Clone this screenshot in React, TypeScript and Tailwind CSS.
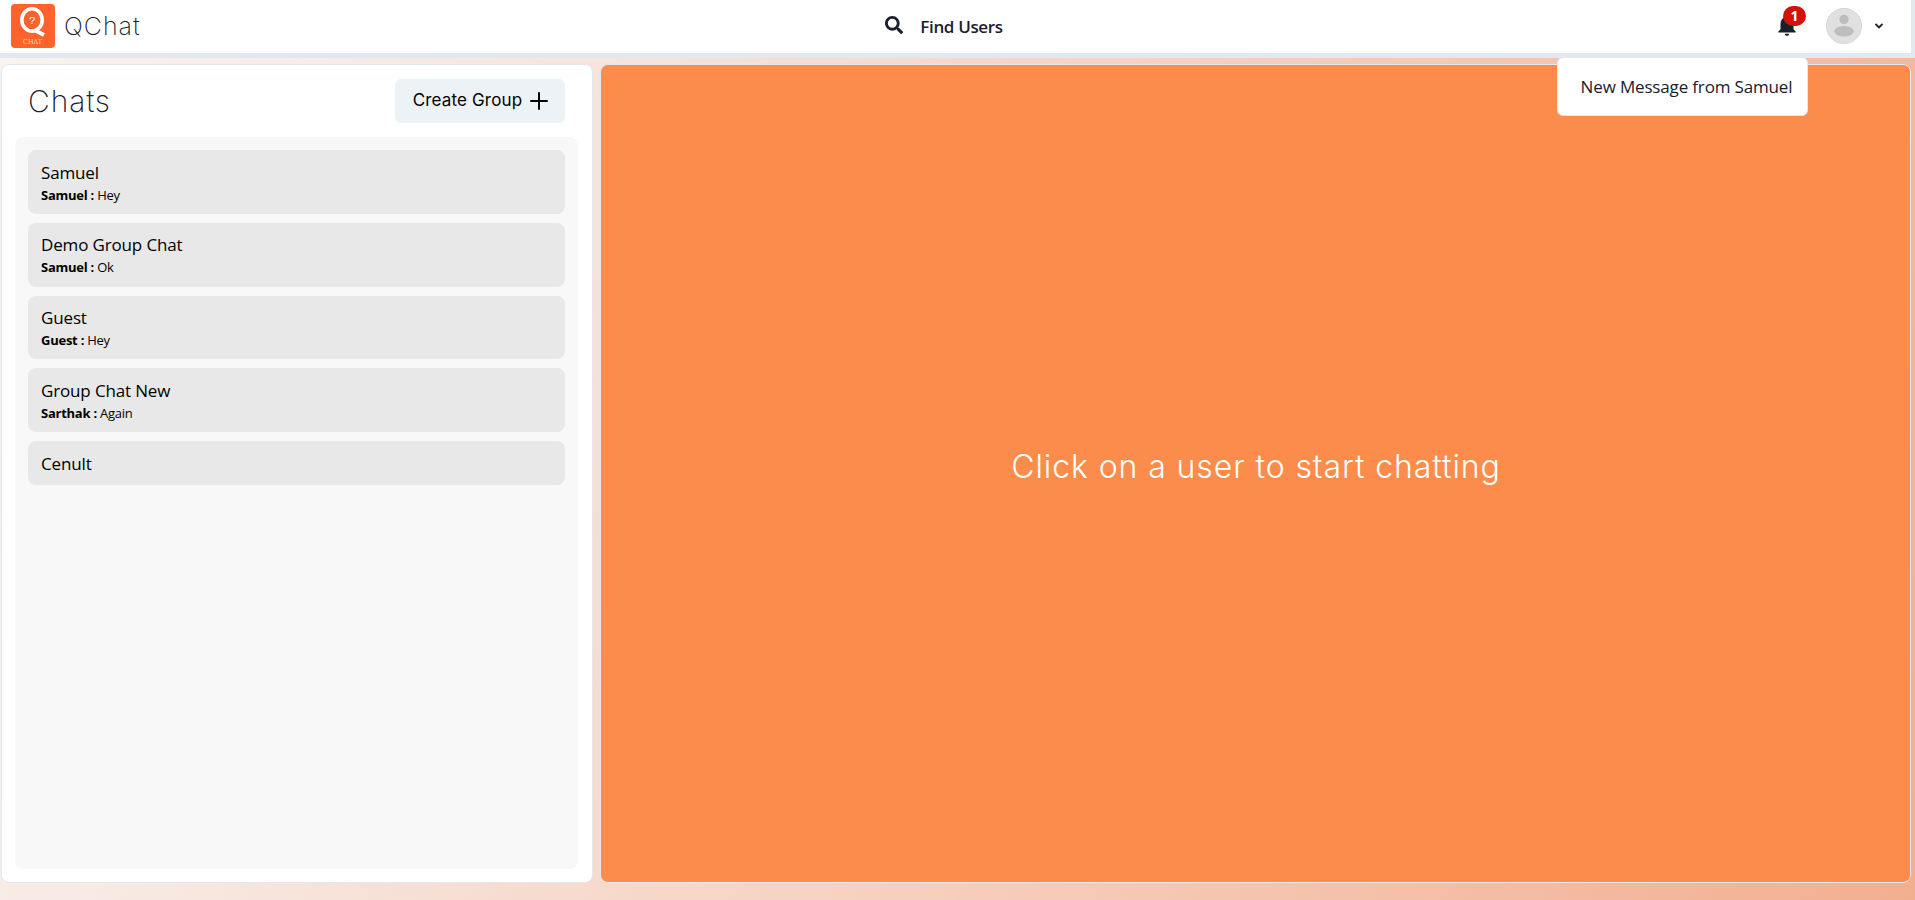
import React from "react";

const chats = [
  { name: "Samuel", sender: "Samuel", message: "Hey" },
  { name: "Demo Group Chat", sender: "Samuel", message: "Ok" },
  { name: "Guest", sender: "Guest", message: "Hey" },
  { name: "Group Chat New", sender: "Sarthak", message: "Again" },
  { name: "Cenult" },
];

function Logo() {
  return (
    <svg width="44" height="44" viewBox="0 0 44 44">
      <rect width="44" height="44" rx="4" fill="#ff622b" />
      <ellipse cx="21" cy="15.9" rx="10.2" ry="11.2" fill="none" stroke="#fff" strokeWidth="3.6" />
      <path d="M23.500 26 33 31" stroke="#fff" strokeWidth="4" />
      <text x="21.2" y="20" textAnchor="middle" fontSize="11" fill="#fff" fontFamily="Liberation Mono, monospace">?</text>
      <text x="12" y="40.3" fontSize="7" textLength="19" lengthAdjust="spacingAndGlyphs" fill="#ffd9c9" fontFamily="DejaVu Serif, serif">CHAT</text>
    </svg>
  );
}

function Header() {
  return (
    <header className="relative z-10 flex h-[58px] items-center justify-between border-r-4 border-b-5 border-[#e1e8ef] bg-white pl-[11px]">
      <div className="flex flex-1 items-center gap-[9px] self-start pt-1">
        <Logo />
        <span className="pt-[2px] font-['Inter',sans-serif] text-[25px] font-extralight tracking-[1px]">QChat</span>
      </div>
      <button className="flex items-center gap-[17px] pr-[6px] text-[17px] font-semibold tracking-[-0.35px]">
        <svg width="18" height="18" viewBox="0 0 512 512" fill="currentColor" className="-mt-[3px]">
          <path d="M505 442.700 405.300 343c-4.500-4.500-10.600-7-17-7H372c27.600-35.300 44-79.700 44-128C416 93.100 322.900 0 208 0S0 93.100 0 208s93.100 208 208 208c48.300 0 92.700-16.400 128-44v16.300c0 6.400 2.500 12.500 7 17l99.700 99.700c9.400 9.400 24.600 9.400 33.900 0l28.300-28.300c9.400-9.400 9.400-24.600.1-34zM208 336c-70.700 0-128-57.200-128-128 0-70.700 57.200-128 128-128 70.700 0 128 57.200 128 128 0 70.700-57.200 128-128 128z" />
        </svg>
        <span>Find Users</span>
      </button>
      <div className="flex flex-1 items-center justify-end pr-[28px] pb-[2px]">
        <div className="relative mr-[26px] mb-[2px]">
          <svg width="26" height="26" viewBox="0 0 24 24" fill="currentColor">
            <path d="M12 22c1.100 0 2-.9 2-2h-4c0 1.100.89 2 2 2zm6-6v-5c0-3.070-1.640-5.640-4.500-6.320V4c0-.83-.67-1.500-1.500-1.500s-1.500.67-1.500 1.500v.68C7.630 5.360 6 7.920 6 11v5l-2 2v1h16v-1l-2-2z" />
          </svg>
          <span className="absolute -top-[6px] left-[9px] flex h-5 w-[23px] items-center justify-center rounded-full bg-[#d3120c] text-[14px] font-bold text-white">1</span>
        </div>
        <svg width="36" height="36" viewBox="0 0 36 36">
          <circle cx="18" cy="18" r="17.700" fill="#e0e0e0" stroke="#cfc0dc" strokeWidth=".6" />
          <circle cx="18" cy="11.500" r="4.700" fill="#bdbdbd" />
          <ellipse cx="18" cy="23.300" rx="9.800" ry="5.300" fill="#bdbdbd" />
        </svg>
        <svg className="ml-[13px]" width="8" height="6" viewBox="0 0 8 6" fill="none" stroke="currentColor" strokeWidth="1.800">
          <path d="m.5 1 3.500 3.500L7.500 1" />
        </svg>
      </div>
      <div className="absolute top-[57px] right-[103px] flex h-[59px] w-[251px] items-center justify-center rounded-md border border-[#e2e8f0] bg-white pl-2">
        <span className="text-[17px] tracking-[-0.16px] whitespace-nowrap">New Message from Samuel</span>
      </div>
    </header>
  );
}

export default function App() {
  return (
    <div className="flex h-[900px] w-full flex-col overflow-hidden bg-[linear-gradient(110deg,#faf3f0_0%,#f7e8e1_22%,#f6d7c8_45%,#f2af90_100%)] font-['Open_Sans',sans-serif] text-[#1a202c]">
      <Header />
      <main className="flex h-[825px] gap-[7px] pt-[6px] pr-[4px] pl-px">
        <section className="flex w-[592px] flex-col rounded-lg border border-[#e2e8f0] bg-white pr-[14px] pb-[13px] pl-[13px]">
          <div className="flex h-[72px] items-center justify-between px-[13px]">
            <h1 className="pt-px font-['Inter',sans-serif] text-[30px] font-extralight tracking-[0.9px]">Chats</h1>
            <button className="flex h-11 w-[170px] items-center justify-center gap-2 rounded-md bg-[#edf2f7] pl-px font-['Inter',sans-serif] text-[17px] tracking-[0.15px] text-black">
              <span>Create Group</span>
              <svg width="18" height="18" viewBox="0 0 18 18" stroke="currentColor" strokeWidth="2" strokeLinecap="round">
                <path d="M9 1v16M1 9h16" />
              </svg>
            </button>
          </div>
          <div className="flex flex-1 flex-col gap-[9px] rounded-lg bg-[#f8f8f8] p-[13px]">
            {chats.map((chat) => (
              <div key={chat.name} className="rounded-lg bg-[#e8e8e8] px-[13px] pt-[9.5px] pb-[8.5px] text-black">
                <p className="text-[17px] leading-[26px] tracking-[-0.15px]">{chat.name}</p>
                {chat.sender && (
                  <p className="text-[13px] leading-[19.800px] tracking-[-0.25px]">
                    <b>{chat.sender} : </b>
                    {chat.message}
                  </p>
                )}
              </div>
            ))}
          </div>
        </section>
        <section className="flex flex-1 items-center justify-center rounded-lg border border-[#e2e8f0] bg-[#fb8c4b] pb-[14px]">
          <p className="pl-px font-['Inter',sans-serif] text-[32px] font-light tracking-[0.9px] text-white">Click on a user to start chatting</p>
        </section>
      </main>
    </div>
  );
}
